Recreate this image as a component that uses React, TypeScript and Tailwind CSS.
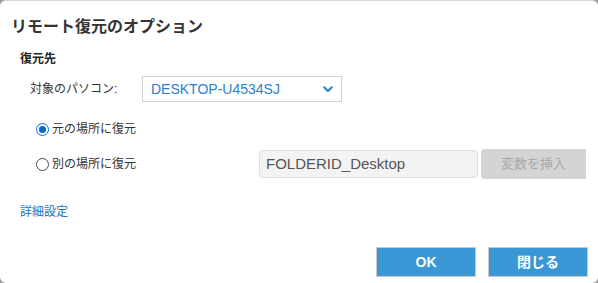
import { useState } from "react";

function Radio({ checked, label, onSelect }: { checked: boolean; label: string; onSelect: () => void }) {
  return (
    <label className="flex cursor-pointer items-center gap-[3px]" onClick={onSelect}>
      {checked ? (
        <span className="flex h-[13px] w-[13px] items-center justify-center rounded-full border-[1.5px] border-[#0a68c9] bg-white">
          <span className="h-[7px] w-[7px] rounded-full bg-[#0a68c9]" />
        </span>
      ) : (
        <span className="h-[13px] w-[13px] rounded-full border border-[#4a4a4a] bg-white" />
      )}
      <span className="text-[12px] leading-[16px] text-[#333]">{label}</span>
    </label>
  );
}

export default function App() {
  const [target, setTarget] = useState<"orig" | "other">("orig");

  return (
    <div className="h-[283px] w-[598px] bg-[#9a9a9a] font-['Liberation_Sans','Noto_Sans_CJK_JP',sans-serif]">
      <div className="flex h-[283px] w-[598px] flex-col rounded-[6px] border-t border-[#d6d6d6] bg-white">
        {/* title */}
        <div className="h-[24px] pl-[11px] pt-[14px] text-[16px] font-bold leading-[24px] text-[#333] box-content">
          リモート復元のオプション
        </div>

        {/* 復元先 */}
        <div className="mt-[11px] pl-[20px] text-[12px] font-bold leading-[18px] text-[#222]">復元先</div>

        <div className="mt-[8px] flex items-center pl-[30px]">
          <span className="w-[112px] text-[12px] text-[#333]">対象のパソコン:</span>
          <div className="flex h-[26px] w-[200px] items-center justify-between border border-[#d2d2d2] bg-white pl-[8px] pr-[8px]">
            <span className="text-[14px] text-[#2b7fd1]">DESKTOP-U4534SJ</span>
            <svg width="10" height="7" viewBox="0 0 10 7" fill="none">
              <path d="M1.2 1.3 L5 5 L8.8 1.3" stroke="#2b7fd1" strokeWidth="2" strokeLinecap="round" strokeLinejoin="round" />
            </svg>
          </div>
        </div>

        <div className="mt-[19px] pl-[36px]">
          <Radio checked={target === "orig"} label="元の場所に復元" onSelect={() => setTarget("orig")} />
        </div>

        <div className="mt-[12px] flex h-[30px] items-center pl-[36px]">
          <div className="w-[223px]">
            <Radio checked={target === "other"} label="別の場所に復元" onSelect={() => setTarget("other")} />
          </div>
          <div className="flex h-[28px] w-[219px] items-center rounded-[4px] border border-[#dcdcdc] bg-[#f3f3f3] pl-[6px] text-[15px] text-[#555]">
            FOLDERID_Desktop
          </div>
          <button
            disabled
            className="ml-[3px] h-[30px] w-[105px] rounded-l-[4px] bg-[#d4d4d4] text-[13px] text-[#a9a9a9]"
          >
            変数を挿入
          </button>
        </div>

        <div className="mt-[25px] pl-[20px] text-[12px] leading-[16px] text-[#1a72c4]">詳細設定</div>

        <div className="mt-[27px] flex justify-end gap-[12px] pr-[10px]">
          <button className="h-[30px] w-[100px] border border-[#c9c9c9] bg-[#3a97d6] text-[14px] font-bold text-white">
            OK
          </button>
          <button className="h-[30px] w-[100px] border border-[#c9c9c9] bg-[#3a97d6] text-[14px] font-bold text-white">
            閉じる
          </button>
        </div>
      </div>
    </div>
  );
}
